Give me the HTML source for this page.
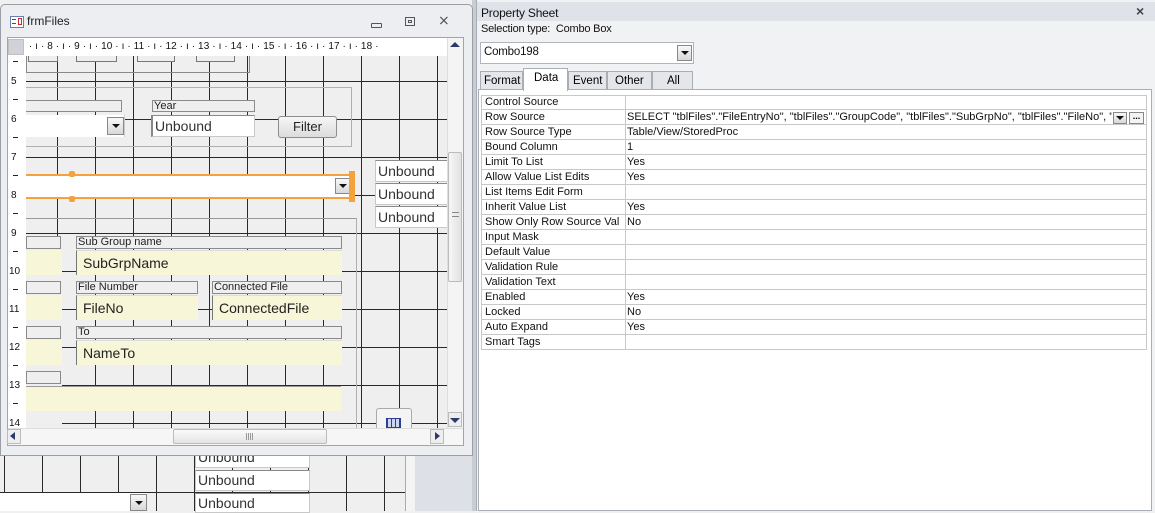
<!DOCTYPE html>
<html><head><meta charset="utf-8"><style>
*{margin:0;padding:0;box-sizing:border-box}
body{width:1155px;height:511px;overflow:hidden;position:relative;background:#f0f0f0;font-family:"Liberation Sans",sans-serif}
.a{position:absolute}
.grid{background-color:#efefef;background-image:linear-gradient(to right,#2a2a2a 1px,transparent 1px),linear-gradient(to bottom,#2a2a2a 1px,transparent 1px);background-size:38px 100%,100% 38px}
.tb{background:#fff;border:1px solid #c8c8c8;border-top-color:#8a8a8a;font-size:14px;color:#333;padding:1px 2px;line-height:18px;overflow:hidden;white-space:nowrap}
.lb{border:1px solid #8a8a8a;background:#efefef;font-size:11px;line-height:10px;color:#222;padding-left:1px;overflow:hidden;white-space:nowrap}
.ye{background:#f8f6d8;font-size:14px;color:#222;padding:4px 6px;border-left:1px solid #777;border-top:1px solid #ddd}
.dd{background:linear-gradient(#f8f8f8,#d8d8d8);border:1px solid #888}
.dd:after{content:"";position:absolute;left:50%;top:50%;margin:-2px 0 0 -4px;border:4px solid transparent;border-top:4px solid #111;border-bottom:0}
.ps{font-size:11px;color:#111;letter-spacing:-0.2px}
.row{position:absolute;left:481px;width:666px;height:15px;border-bottom:1px solid #c8c8c8;border-left:1px solid #c8c8c8;border-right:1px solid #c8c8c8}
.row span{position:absolute;left:3px;top:1px;font-size:11px;line-height:13px;color:#111;white-space:nowrap;width:140px;overflow:hidden}
.row b{font-weight:normal;position:absolute;left:145px;top:1px;font-size:11px;line-height:13px;color:#111;white-space:nowrap;width:485px;overflow:hidden}
.row:before{content:"";position:absolute;left:143px;top:0;bottom:0;border-left:1px solid #c8c8c8}
.rn{position:absolute;font-size:10px;color:#111;line-height:10px}
.dash{position:absolute;left:5px;width:5px;height:1px;background:#222}
</style></head><body>

<div class="a grid" style="left:0;top:440px;width:415px;height:71px;background-position:4px 0,0 14px;background-color:#efefef"></div>
<div class="a" style="left:0;top:493px;width:147px;height:18px;background:#fff"></div>
<div class="a dd" style="left:130px;top:494px;width:17px;height:17px"></div>
<div class="a tb" style="left:195px;top:447px;width:115px;height:21px;line-height:17px">Unbound</div>
<div class="a tb" style="left:195px;top:470px;width:115px;height:21px;line-height:17px">Unbound</div>
<div class="a tb" style="left:195px;top:493px;width:115px;height:20px;line-height:17px">Unbound</div>
<div class="a" style="left:405px;top:440px;width:10px;height:71px;background:#f4f4f4;border-left:1px solid #aaa"></div>
<div class="a" style="left:415px;top:440px;width:61px;height:71px;background:#dde0e7"></div>
<div class="a" style="left:472px;top:0;width:5px;height:511px;background:#c9ccd2"></div>

<div class="a" style="left:0;top:4px;width:473px;height:452px;background:#eceef2;border:1px solid #9a9ea6;border-radius:5px 5px 0 0"></div>
<div class="a" style="left:10px;top:16px;width:14px;height:12px;border:1px solid #6a7fb0;background:#fff"></div>
<div class="a" style="left:12px;top:19px;width:4px;height:1px;background:#3050a0"></div>
<div class="a" style="left:12px;top:23px;width:4px;height:1px;background:#3050a0"></div>
<div class="a" style="left:18px;top:18px;width:4px;height:7px;border:1px solid #c03030"></div>
<div class="a" style="left:27px;top:14px;font-size:12px;color:#222">frmFiles</div>
<div class="a" style="left:371px;top:23px;width:11px;height:5px;border:1px solid #555;border-radius:1px"></div>
<div class="a" style="left:405px;top:17px;width:10px;height:9px;border:1px solid #555"></div>
<div class="a" style="left:408px;top:20px;width:4px;height:3px;border:1px solid #555"></div>
<div class="a" style="left:438px;top:12px;font-size:14px;color:#555">&#x2A2F;</div>

<div class="a" style="left:7px;top:37px;width:457px;height:409px;border:1px solid #a0a4ac;background:#fff"></div>
<div class="a" style="left:8px;top:39px;width:16px;height:16px;background:#d0d2d8;border:1px solid #c0c0c0"></div>
<div class="a" style="left:26px;top:39px;width:421px;height:16px;background:#fff;font-size:10px;color:#111;line-height:16px;overflow:hidden;white-space:nowrap;letter-spacing:0.1px">&nbsp;· ı · 8 · ı · 9 · ı · 10 · ı · 11 · ı · 12 · ı · 13 · ı · 14 · ı · 15 · ı · 16 · ı · 17 · ı · 18 ·</div>
<div class="a" style="left:8px;top:56px;width:16px;height:372px;background:#fff;overflow:hidden">
<div class="dash" style="top:5px"></div><div class="dash" style="top:43px"></div><div class="dash" style="top:81px"></div><div class="dash" style="top:119px"></div><div class="dash" style="top:157px"></div><div class="dash" style="top:195px"></div><div class="dash" style="top:233px"></div><div class="dash" style="top:271px"></div><div class="dash" style="top:309px"></div><div class="dash" style="top:347px"></div>
<div class="rn" style="left:3px;top:21px">5</div><div class="rn" style="left:3px;top:59px">6</div><div class="rn" style="left:3px;top:97px">7</div><div class="rn" style="left:3px;top:135px">8</div><div class="rn" style="left:3px;top:173px">9</div><div class="rn" style="left:1px;top:211px">10</div><div class="rn" style="left:1px;top:249px">11</div><div class="rn" style="left:1px;top:287px">12</div><div class="rn" style="left:1px;top:325px">13</div><div class="rn" style="left:1px;top:363px">14</div>
</div>

<div class="a grid" style="left:26px;top:56px;width:421px;height:372px;background-position:31px 0,0 25px;overflow:hidden">
 <div class="a" style="left:0;top:-2px;width:224px;height:19px;border:1px solid #888;border-top:0;background:transparent"></div>
 <div class="a" style="left:2px;top:0;width:30px;height:6px;border:1px solid #777;border-top:0;background:#eee"></div>
 <div class="a" style="left:50px;top:0;width:41px;height:6px;border:1px solid #777;border-top:0;background:#eee"></div>
 <div class="a" style="left:111px;top:0;width:38px;height:6px;border:1px solid #777;border-top:0;background:#eee"></div>
 <div class="a" style="left:170px;top:0;width:39px;height:6px;border:1px solid #777;border-top:0;background:#eee"></div>
 <div class="a" style="left:-2px;top:31px;width:328px;height:60px;border:1px solid #b0b0b0"></div>
 <div class="a lb" style="left:-2px;top:44px;width:98px;height:12px"></div>
 <div class="a" style="left:0;top:59px;width:99px;height:22px;background:#fff;border-right:1px solid #ccc"></div>
 <div class="a dd" style="left:81px;top:61px;width:17px;height:18px"></div>
 <div class="a lb" style="left:126px;top:44px;width:103px;height:12px">Year</div>
 <div class="a tb" style="left:125px;top:59px;width:104px;height:22px;border-left:2px solid #888">Unbound</div>
 <div class="a" style="left:252px;top:60px;width:59px;height:22px;border:1px solid #8d8d8d;border-radius:3px;background:linear-gradient(#f6f6f6,#dcdcdc);font-size:13px;color:#222;text-align:center;line-height:20px">Filter</div>
 <div class="a" style="left:-2px;top:118px;width:328px;height:25px;background:#fff;border:2px solid #f3a23e"></div>
 <div class="a dd" style="left:309px;top:122px;width:16px;height:16px"></div>
 <div class="a" style="left:43px;top:115px;width:6px;height:6px;background:#f3a23e;border-radius:2px"></div>
 <div class="a" style="left:43px;top:140px;width:6px;height:6px;background:#f3a23e;border-radius:2px"></div>
 <div class="a" style="left:323px;top:115px;width:6px;height:31px;background:#f3a23e"></div>
 <div class="a tb" style="left:349px;top:104px;width:75px;height:22px">Unbound</div>
 <div class="a tb" style="left:349px;top:127px;width:75px;height:22px">Unbound</div>
 <div class="a tb" style="left:349px;top:150px;width:75px;height:22px">Unbound</div>
 <div class="a" style="left:-2px;top:162px;width:333px;height:220px;border:1px solid #b0b0b0;border-top-color:#999"></div>
 <div class="a" style="left:-2px;top:180px;width:38px;height:195px;background:#efefef"></div>
 <div class="a lb" style="left:0;top:180px;width:35px;height:13px"></div>
 <div class="a lb" style="left:0;top:225px;width:35px;height:13px"></div>
 <div class="a lb" style="left:0;top:270px;width:35px;height:13px"></div>
 <div class="a lb" style="left:0;top:315px;width:35px;height:13px"></div>
 <div class="a" style="left:0;top:194px;width:36px;height:25px;background:#f8f6d8"></div>
 <div class="a" style="left:0;top:239px;width:36px;height:25px;background:#f8f6d8"></div>
 <div class="a" style="left:0;top:284px;width:36px;height:25px;background:#f8f6d8"></div>
 <div class="a lb" style="left:50px;top:180px;width:266px;height:13px">Sub Group name</div>
 <div class="a ye" style="left:50px;top:194px;width:266px;height:25px">SubGrpName</div>
 <div class="a lb" style="left:50px;top:225px;width:122px;height:13px">File Number</div>
 <div class="a lb" style="left:186px;top:225px;width:130px;height:13px">Connected File</div>
 <div class="a ye" style="left:50px;top:239px;width:122px;height:25px">FileNo</div>
 <div class="a ye" style="left:186px;top:239px;width:130px;height:25px">ConnectedFile</div>
 <div class="a lb" style="left:50px;top:270px;width:266px;height:13px">To</div>
 <div class="a ye" style="left:50px;top:284px;width:266px;height:25px">NameTo</div>
 <div class="a" style="left:0;top:330px;width:315px;height:25px;background:#f8f6d8;border-top:1px solid #999"></div>
 <div class="a" style="left:350px;top:352px;width:36px;height:25px;border:1px solid #aaa;border-radius:3px 3px 0 0;background:#f4f4f4"></div>
 <div class="a" style="left:360px;top:362px;width:15px;height:10px;border:1px solid #2a3f8f;background:repeating-linear-gradient(90deg,#2a3f8f 0 1px,#cdd6f0 1px 4px)"></div>
</div>

<div class="a" style="left:447px;top:38px;width:16px;height:390px;background:#f4f4f4;border-left:1px solid #ddd"></div>
<div class="a" style="left:450px;top:42px;border:5px solid transparent;border-bottom:5px solid #2a3a6a;border-top:0"></div>
<div class="a" style="left:448px;top:152px;width:14px;height:130px;border:1px solid #bbb;border-radius:2px;background:linear-gradient(90deg,#f6f6f6,#e2e2e2)"></div>
<div class="a" style="left:452px;top:212px;width:7px;height:5px;border-top:1px solid #888;border-bottom:1px solid #888"></div>
<div class="a" style="left:448px;top:412px;width:14px;height:15px;border:1px solid #bbb;background:#eee"></div>
<div class="a" style="left:450px;top:418px;border:5px solid transparent;border-top:5px solid #2a3a6a;border-bottom:0"></div>
<div class="a" style="left:8px;top:428px;width:455px;height:17px;background:#f6f6f6;border-top:1px solid #ddd"></div>
<div class="a" style="left:7px;top:429px;width:14px;height:15px;border:1px solid #bbb;background:#eee"></div>
<div class="a" style="left:10px;top:432px;border:4px solid transparent;border-right:5px solid #2a3a6a;border-left:0"></div>
<div class="a" style="left:173px;top:429px;width:154px;height:15px;border:1px solid #bbb;border-radius:2px;background:linear-gradient(#fafafa,#e4e4e4)"></div>
<div class="a" style="left:246px;top:433px;width:7px;height:7px;background:repeating-linear-gradient(90deg,#999 0 1px,transparent 1px 2px)"></div>
<div class="a" style="left:430px;top:429px;width:14px;height:15px;border:1px solid #bbb;background:#eee"></div>
<div class="a" style="left:435px;top:432px;border:4px solid transparent;border-left:5px solid #2a3a6a;border-right:0"></div>

<div class="a" style="left:476px;top:0;width:679px;height:511px;background:#f1f2f4;border-left:1px solid #a9aeb6"></div>
<div class="a" style="left:477px;top:2px;width:678px;height:19px;background:#dfe3e9"></div>
<div class="a ps" style="left:481px;top:6px;font-size:12px">Property Sheet</div>
<div class="a" style="left:1136px;top:3px;font-size:14px;font-weight:bold;color:#444">×</div>
<div class="a ps" style="left:481px;top:23px">Selection type:&nbsp; Combo Box</div>
<div class="a" style="left:480px;top:42px;width:214px;height:22px;background:#fff;border:1px solid #b0b4bc"></div>
<div class="a ps" style="left:484px;top:46px;font-size:11.5px">Combo198</div>
<div class="a dd" style="left:677px;top:45px;width:15px;height:16px"></div>
<div class="a" style="left:478px;top:89px;width:674px;height:422px;background:#fff;border:1px solid #a9aeb6"></div>
<div class="a" style="left:480px;top:71px;width:43px;height:19px;background:#e4e6ea;border:1px solid #a9aeb6;font-size:11.5px;padding:3px 3px">Format</div>
<div class="a" style="left:523px;top:68px;width:45px;height:23px;background:#fff;border:1px solid #a9aeb6;border-bottom:0;font-size:11.5px;padding:3px 10px">Data</div>
<div class="a" style="left:568px;top:71px;width:39px;height:19px;background:#e4e6ea;border:1px solid #a9aeb6;font-size:11.5px;padding:3px 4px">Event</div>
<div class="a" style="left:607px;top:71px;width:45px;height:19px;background:#e4e6ea;border:1px solid #a9aeb6;font-size:11.5px;padding:3px 7px">Other</div>
<div class="a" style="left:652px;top:71px;width:41px;height:19px;background:#e4e6ea;border:1px solid #a9aeb6;font-size:11.5px;padding:3px 14px">All</div>
<div class="a" style="left:481px;top:95px;width:666px;height:1px;background:#c8c8c8"></div>
<div class="row" style="top:95px"><span>Control Source</span></div>
<div class="row" style="top:110px"><span>Row Source</span><b>SELECT "tblFiles"."FileEntryNo", "tblFiles"."GroupCode", "tblFiles"."SubGrpNo", "tblFiles"."FileNo", "tblFiles"</b></div>
<div class="a" style="left:1112px;top:111px;width:34px;height:13px;background:#fff"></div>
<div class="a dd" style="left:1113px;top:112px;width:14px;height:12px"></div>
<div class="a" style="left:1129px;top:112px;width:15px;height:12px;border:1px solid #888;background:#f4f4f4;font-size:9px;line-height:6px;text-align:center;font-weight:bold">...</div>
<div class="row" style="top:125px"><span>Row Source Type</span><b>Table/View/StoredProc</b></div>
<div class="row" style="top:140px"><span>Bound Column</span><b>1</b></div>
<div class="row" style="top:155px"><span>Limit To List</span><b>Yes</b></div>
<div class="row" style="top:170px"><span>Allow Value List Edits</span><b>Yes</b></div>
<div class="row" style="top:185px"><span>List Items Edit Form</span></div>
<div class="row" style="top:200px"><span>Inherit Value List</span><b>Yes</b></div>
<div class="row" style="top:215px"><span>Show Only Row Source Val</span><b>No</b></div>
<div class="row" style="top:230px"><span>Input Mask</span></div>
<div class="row" style="top:245px"><span>Default Value</span></div>
<div class="row" style="top:260px"><span>Validation Rule</span></div>
<div class="row" style="top:275px"><span>Validation Text</span></div>
<div class="row" style="top:290px"><span>Enabled</span><b>Yes</b></div>
<div class="row" style="top:305px"><span>Locked</span><b>No</b></div>
<div class="row" style="top:320px"><span>Auto Expand</span><b>Yes</b></div>
<div class="row" style="top:335px"><span>Smart Tags</span></div>
</body></html>
